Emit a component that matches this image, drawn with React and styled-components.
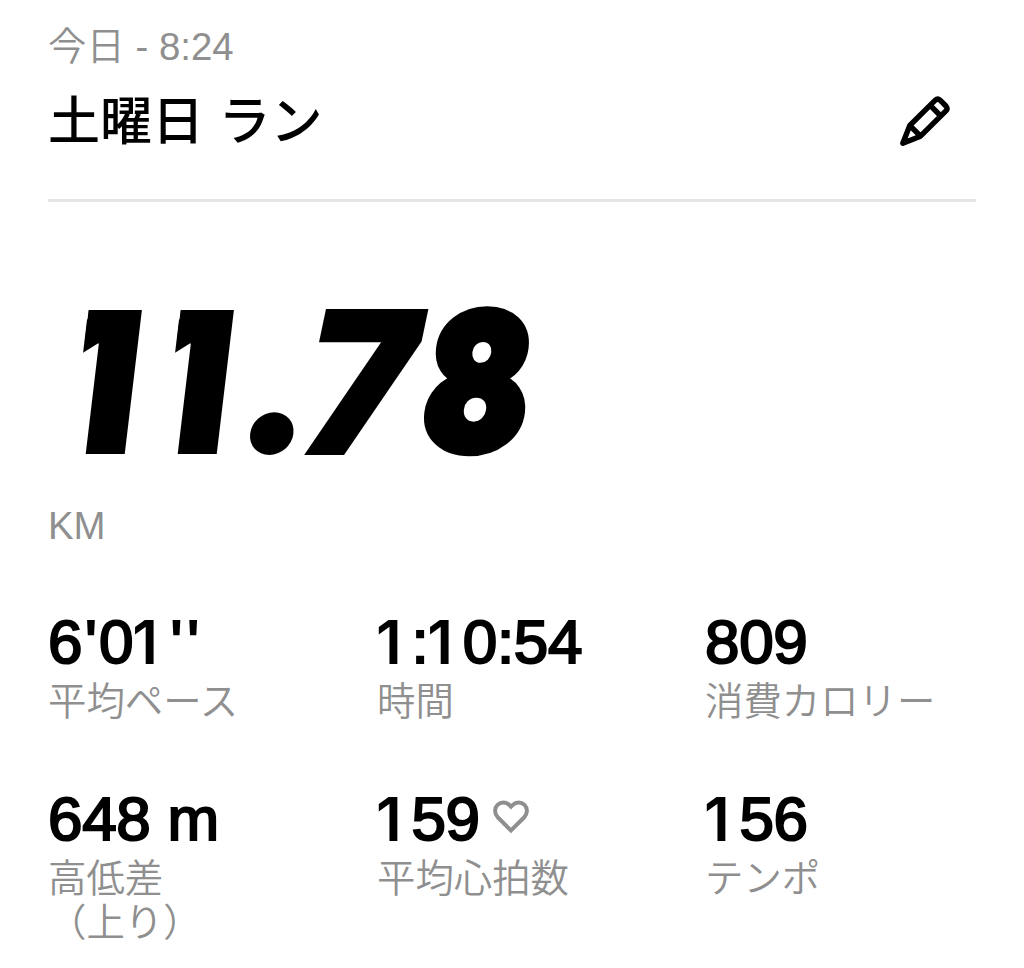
import React from 'react';
import styled, { createGlobalStyle, css } from 'styled-components';

const GlobalStyle = createGlobalStyle`
  * {
    box-sizing: border-box;
  }

  body {
    margin: 0;
    background-color: #ffffff;
    color: #000000;
    font-family: 'Liberation Sans', 'Noto Sans CJK JP', sans-serif;
  }
`;

const mutedText = css`
  color: #8f8f8f;
  font-size: 38.4px;
  font-weight: 350;
  line-height: 44px;
`;

const Page = styled.main`
  height: 968px;
  padding: 25px 48px 0;
  overflow: hidden;
`;

const Header = styled.header`
  height: 177px;
  border-bottom: 3px solid #e5e5e5;
`;

const StartTime = styled.div`
  ${mutedText}
`;

const TitleRow = styled.div`
  display: flex;
  align-items: center;
  justify-content: space-between;
  height: 60px;
  margin-top: 23px;
  padding-right: 25px;
`;

const Title = styled.h1`
  margin: 0;
  font-size: 52px;
  font-weight: 500;
  line-height: 60px;
`;

const PencilIcon = styled.svg`
  width: 54px;
  height: 54px;
  fill: none;
  stroke: #000000;
  stroke-width: 5.4;
  stroke-linejoin: round;
`;

const Distance = styled.div`
  display: flex;
  height: 200px;
  margin-top: 80px;
  padding-left: 5px;
  font-family: Inter, sans-serif;
  font-size: 198px;
  font-weight: 900;
  line-height: 200px;
`;

const Digit = styled.span`
  display: block;
  flex: none;
  width: ${({ $width }) => $width}px;
  transform: skewX(-6.8deg);
`;

/* Square flag instead of the slanted one of the typeface */
const DigitOne = styled(Digit)`
  clip-path: inset(0 -20px 0 26.6px);

  &::before {
    content: '';
    float: left;
    width: 20px;
    height: 33px;
    margin: 28px -46.6px 0 26.6px;
    background-color: #000000;
  }
`;

const DigitPoint = styled(Digit)`
  margin: -10px 1px 0 17.5px;
  font-family: Lato, sans-serif;
  -webkit-text-stroke: 11px #000000;
`;

const DigitSeven = styled(Digit)`
  margin-left: -8.5px;
  transform: skewX(-11.8deg) scaleX(0.94);
  -webkit-text-stroke: 2px #000000;
`;

const DigitEight = styled(Digit)`
  margin-left: -7.5px;
  font-size: 189px;
  transform: skewX(-6.8deg) scaleX(0.81);
  -webkit-text-stroke: 9px #000000;
`;

const Unit = styled.div`
  ${mutedText}
  margin-top: 22px;
`;

const Stats = styled.section`
  display: grid;
  grid-template-columns: 329px 328px 1fr;
  grid-auto-rows: 177px;
  margin-top: 61px;
`;

const Stat = styled.div`
  white-space: nowrap;
`;

const Value = styled.div`
  display: flex;
  align-items: center;
  height: 66px;
  font-size: 62px;
  line-height: 66px;
  letter-spacing: -0.3px;
  white-space: pre;
  -webkit-text-stroke: 2.1px #000000;
`;

const Prime = styled.span`
  padding: 0 2.7px;
`;

/* Inter draws the figure without a foot */
const One = styled.span`
  width: 34.4px;
  font-family: Inter, sans-serif;
  font-size: 61px;
  font-weight: 600;
  text-indent: -1px;
  -webkit-text-stroke: 0;
`;

const Label = styled.div`
  ${mutedText}
  margin-top: 5px;
  white-space: pre-line;
`;

const HeartIcon = styled.svg`
  width: 36px;
  height: 34px;
  margin: -5px 0 0 13px;
  fill: none;
  stroke: #8f8f8f;
  stroke-width: 4;
`;

function Heart() {
  return (
    <HeartIcon viewBox="0 0 36 34">
      <path d="M18 30.5 L5 17.5 C1.2 13.5 1.2 8.2 4.5 4.9 C7.8 1.6 13 1.6 16.2 4.9 L18 6.7 L19.8 4.9 C23 1.6 28.2 1.6 31.5 4.9 C34.8 8.2 34.8 13.5 31 17.5 Z" />
    </HeartIcon>
  );
}

function Pencil() {
  return (
    <PencilIcon viewBox="0 0 54 54">
      <path d="M5.8 48.2 L12.8 30.5 L38.3 5.2 Q40.7 3 43.1 5.2 L48.9 11 Q51.2 13.5 48.9 15.9 L23.5 41.2 Z M12.8 30.5 L23.5 41.2 M33.2 10.3 L43.8 21" />
    </PencilIcon>
  );
}

const stats = [
  { value: "6'01''", label: '平均ペース' },
  { value: '1:10:54', label: '時間' },
  { value: '809', label: '消費カロリー' },
  { value: '648 m', label: '高低差\n（上り）' },
  { value: '159', label: '平均心拍数', icon: <Heart /> },
  { value: '156', label: 'テンポ' },
];

function renderValue(value) {
  return value.split(/(1|')/).map((part, index) => {
    if (part === '1') return <One key={index}>1</One>;
    if (part === "'") return <Prime key={index}>'</Prime>;
    return part && <span key={index}>{part}</span>;
  });
}

export default function App() {
  return (
    <Page lang="ja">
      <GlobalStyle />
      <Header>
        <StartTime>今日 - 8:24</StartTime>
        <TitleRow>
          <Title>土曜日 ラン</Title>
          <Pencil />
        </TitleRow>
      </Header>
      <Distance>
        <DigitOne $width={92}>1</DigitOne>
        <DigitOne $width={92}>1</DigitOne>
        <DigitPoint $width={56}>.</DigitPoint>
        <DigitSeven $width={120}>7</DigitSeven>
        <DigitEight $width={110}>8</DigitEight>
      </Distance>
      <Unit>KM</Unit>
      <Stats>
        {stats.map(({ value, label, icon }) => (
          <Stat key={label}>
            <Value>
              {renderValue(value)}
              {icon}
            </Value>
            <Label>{label}</Label>
          </Stat>
        ))}
      </Stats>
    </Page>
  );
}
